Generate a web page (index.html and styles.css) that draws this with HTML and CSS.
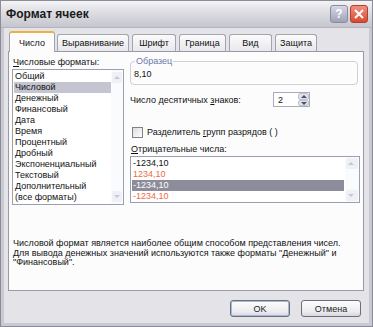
FILE: index.html
```html
<!DOCTYPE html>
<html>
<head>
    <meta charset="UTF-8">
    <title>Формат ячеек</title>
    <link rel="stylesheet" href="styles.css">
</head>
<body>
    <div class="window">
        <div class="titlebar">
            <span class="title">Формат ячеек</span>
            <span class="tbtn help">?</span>
            <span class="tbtn close">
                <svg width="10" height="10" viewBox="0 0 10 10"><path d="M1 1 L9 9 M9 1 L1 9" stroke="#fff" stroke-width="2"/></svg>
            </span>
        </div>

        <div class="client">
            <div class="tabs">
                <div class="tab active t1">Число</div>
                <div class="tab t2">Выравнивание</div>
                <div class="tab t3">Шрифт</div>
                <div class="tab t4">Граница</div>
                <div class="tab t5">Вид</div>
                <div class="tab t6">Защита</div>
            </div>

            <div class="panel">
                <div class="cols">
                    <div class="left">
                        <div class="label"><u>Ч</u>исловые форматы:</div>
                        <div class="listbox formats">
                            <ul class="items">
                                <li>Общий</li>
                                <li class="sel">Числовой</li>
                                <li>Денежный</li>
                                <li>Финансовый</li>
                                <li>Дата</li>
                                <li>Время</li>
                                <li>Процентный</li>
                                <li>Дробный</li>
                                <li>Экспоненциальный</li>
                                <li>Текстовый</li>
                                <li>Дополнительный</li>
                                <li>(все форматы)</li>
                            </ul>
                            <div class="scroll">
                                <span class="arrow up"></span>
                                <span class="arrow down"></span>
                            </div>
                        </div>
                    </div>

                    <div class="right">
                        <fieldset class="sample">
                            <legend>Образец</legend>
                            <div class="sample-value">8,10</div>
                        </fieldset>

                        <div class="decimals">
                            <span class="dec-label">Число десятичных <u>з</u>наков:</span>
                            <div class="spin">
                                <span class="spin-value">2</span>
                                <span class="spin-btns">
                                    <span class="sb up"></span>
                                    <span class="sb down"></span>
                                </span>
                            </div>
                        </div>

                        <div class="check">
                            <span class="box"></span>
                            <span>Разделитель <u>г</u>рупп разрядов ( )</span>
                        </div>

                        <div class="label"><u>О</u>трицательные числа:</div>
                        <div class="listbox negatives">
                            <ul class="items">
                                <li>-1234,10</li>
                                <li class="red">1234,10</li>
                                <li class="sel dark">-1234,10</li>
                                <li class="red">-1234,10</li>
                            </ul>
                            <div class="scroll">
                                <span class="arrow up"></span>
                                <span class="arrow down"></span>
                            </div>
                        </div>
                    </div>
                </div>

                <p class="desc">Числовой формат является наиболее общим способом представления чисел.
                Для вывода денежных значений используются также форматы "Денежный" и "Финансовый".</p>
            </div>

            <div class="buttons">
                <button class="btn default">OK</button>
                <button class="btn">Отмена</button>
            </div>
        </div>
    </div>
</body>
</html>
```

FILE: styles.css
```css
body {
    margin: 0;
    font-family: "Liberation Sans", Arial, sans-serif;
    font-size: 9px;
    color: #111;
    background: #fff;
}

.window {
    width: 373px;
    height: 327px;
    box-sizing: border-box;
    border: 1px solid #8c8c98;
    background: #c9c9d2;
    display: flex;
    flex-direction: column;
}

.titlebar {
    height: 26px;
    display: flex;
    align-items: center;
    padding: 0 4px 0 5px;
    background: linear-gradient(#f4f4f6, #dcdce2 45%, #c6c6ce);
    border-bottom: 1px solid #b4b4be;
}

.title {
    flex: 1;
    font-weight: bold;
    font-size: 12px;
    color: #1a1a1a;
}

.tbtn {
    width: 16px;
    height: 16px;
    border-radius: 3px;
    display: flex;
    align-items: center;
    justify-content: center;
    margin-left: 2px;
}

.help {
    background: linear-gradient(#d6d8e6, #9fa2b8);
    border: 1px solid #8a8ca0;
    color: #fff;
    font-weight: bold;
    font-size: 12px;
}

.close {
    background: linear-gradient(#f09080, #d84a30);
    border: 1px solid #b04030;
}

.client {
    flex: 1;
    margin: 0 3px 3px;
    background: #e3e3e8;
    padding: 3px 5px 0 4px;
    display: flex;
    flex-direction: column;
}

.tabs {
    display: flex;
    align-items: flex-end;
    height: 20px;
    padding-left: 1px;
    position: relative;
    z-index: 1;
}

.tab {
    height: 17px;
    line-height: 16px;
    text-align: center;
    box-sizing: border-box;
    border: 1px solid #a4a4b0;
    border-bottom: none;
    border-radius: 3px 3px 0 0;
    background: linear-gradient(#fbfbfb, #e8e8ec);
    margin-right: 3px;
}

.tab.active {
    height: 21px;
    line-height: 20px;
    background: #fcfcfd;
    border-top: 2px solid #f0b040;
    margin-bottom: -1px;
    margin-right: 2px;
}

.t1 { width: 46px; }
.t2 { width: 72px; }
.t3 { width: 44px; }
.t4 { width: 47px; }
.t5 { width: 43px; }
.t6 { width: 42px; }

.panel {
    flex: 0 0 240px;
    box-sizing: border-box;
    border: 1px solid #9a9aa6;
    background: #fcfcfd;
    padding: 5px 3px 0 3px;
}

.cols {
    display: grid;
    grid-template-columns: 112px 1fr;
    column-gap: 6px;
}

.label {
    height: 11px;
    line-height: 11px;
    padding-left: 1px;
    margin-bottom: 1px;
}

.listbox {
    display: flex;
    box-sizing: border-box;
    border: 1px solid #9aa0b0;
    background: #fff;
}

.formats {
    height: 136px;
}

.items {
    list-style: none;
    margin: 0;
    padding: 1px 0 0 1px;
    flex: 1;
}

.items li {
    height: 11px;
    line-height: 11px;
    padding-left: 1px;
    white-space: nowrap;
}

.items li.sel {
    background: #c4c5d0;
}

.items li.sel.dark {
    background: #8c8c9a;
    color: #fff;
}

.items li.red {
    color: #ee6a44;
}

.scroll {
    width: 12px;
    background: #fafbfc;
    display: flex;
    flex-direction: column;
    justify-content: space-between;
    padding: 2px 0;
}

.arrow {
    height: 11px;
    margin: 0 1px;
    border-radius: 2px;
    background: #eef0f6;
    position: relative;
}

.arrow::after {
    content: "";
    position: absolute;
    left: 2px;
    top: 4px;
    border-left: 3px solid transparent;
    border-right: 3px solid transparent;
}

.arrow.up::after {
    border-bottom: 3px solid #c4c8d4;
}

.arrow.down::after {
    border-top: 3px solid #c4c8d4;
}

.sample {
    margin: 0 2px 0 0;
    height: 28px;
    box-sizing: border-box;
    border: 1px solid #d0d0d8;
    border-radius: 4px;
    padding: 0 3px;
}

.sample legend {
    padding: 0 1px;
    margin-left: 1px;
    color: #6a78a8;
    line-height: 8px;
}

.sample-value {
    line-height: 12px;
    padding-top: 3px;
}

.decimals {
    display: flex;
    align-items: center;
    margin-top: 7px;
    height: 15px;
}

.dec-label {
    width: 143px;
}

.spin {
    width: 37px;
    height: 15px;
    box-sizing: border-box;
    border: 1px solid #a8acbc;
    background: #fff;
    display: flex;
    align-items: center;
}

.spin-value {
    flex: 1;
    padding-left: 4px;
}

.spin-btns {
    width: 11px;
    height: 13px;
    display: flex;
    flex-direction: column;
}

.sb {
    flex: 1;
    box-sizing: border-box;
    border: 1px solid #c0c4d0;
    border-radius: 2px;
    background: #dfe2ea;
    position: relative;
}

.sb::after {
    content: "";
    position: absolute;
    left: 2px;
    top: 1px;
    border-left: 3px solid transparent;
    border-right: 3px solid transparent;
}

.sb.up::after {
    border-bottom: 3px solid #505060;
}

.sb.down::after {
    border-top: 3px solid #505060;
}

.check {
    display: flex;
    align-items: center;
    margin-top: 19px;
    height: 12px;
    padding-left: 2px;
}

.box {
    width: 11px;
    height: 11px;
    box-sizing: border-box;
    border: 1px solid #80808a;
    background: linear-gradient(135deg, #dcdcdc, #fff);
    margin-right: 4px;
}

.right .label {
    margin-top: 6px;
}

.negatives {
    height: 47px;
}

.negatives .items li.sel {
    margin-right: 1px;
}

.negatives .scroll {
    width: 14px;
    padding: 1px 0;
}

.desc {
    margin: 34px 0 0 1px;
    line-height: 9.5px;
    width: 340px;
}

.buttons {
    display: flex;
    justify-content: flex-end;
    gap: 11px;
    padding: 9px 3px 0 0;
}

.btn {
    width: 60px;
    height: 17px;
    font-family: "Liberation Sans", Arial, sans-serif;
    font-size: 9px;
    color: #222;
    border: 1px solid #6e6e7a;
    border-radius: 3px;
    background: linear-gradient(#fdfdfd, #ececf0 70%, #d6d6de);
    padding: 0;
}

.btn.default {
    box-shadow: inset 0 0 0 1px #a8b8d8;
}
```
